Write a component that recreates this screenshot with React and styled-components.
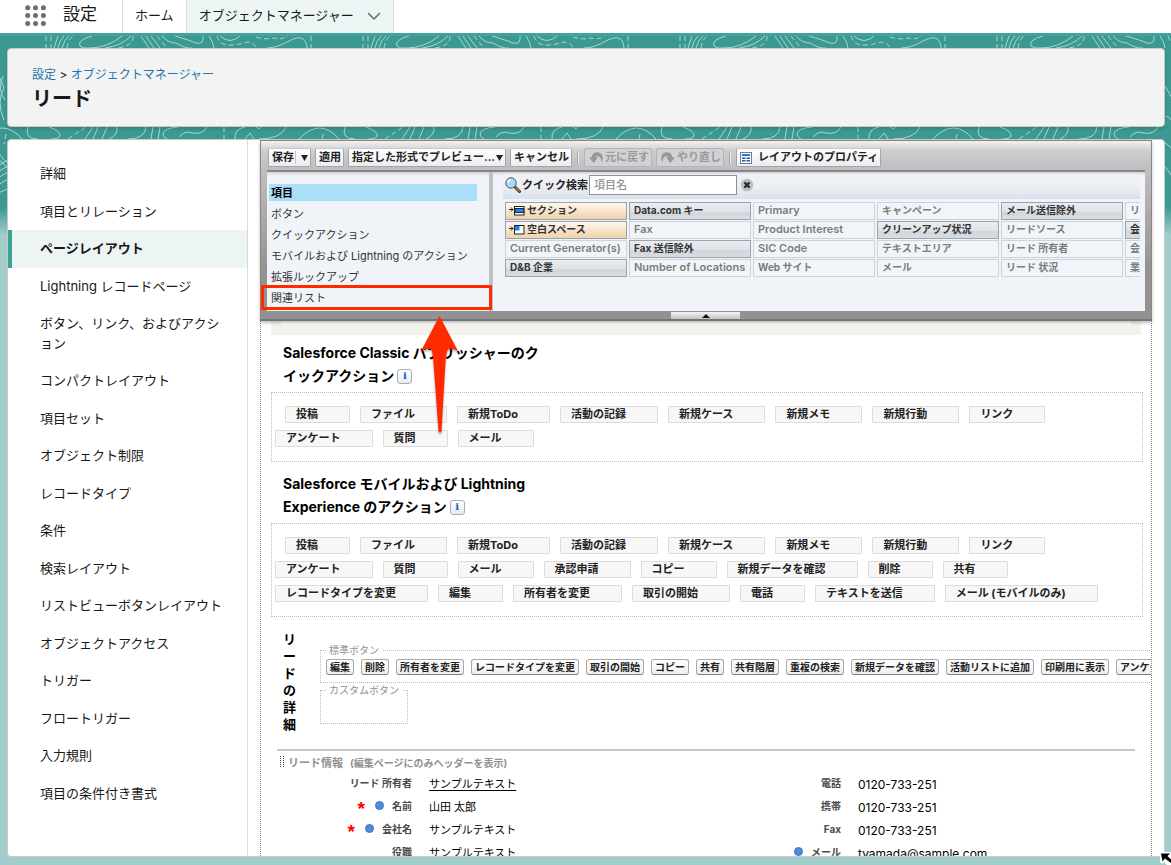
import React from "react";
import styled, { createGlobalStyle, css } from "styled-components";

const GlobalStyle = createGlobalStyle`
  *, *::before, *::after { box-sizing: border-box; }
  body {
    margin: 0;
    font-family: Inter, "Noto Sans CJK JP", sans-serif;
    color: #181818;
    background: #a0cdc9;
  }
  button, input { font-family: inherit; }
  ul, dl, dd, h1, h2, h3, p { margin: 0; padding: 0; }
  ul { list-style: none; }
`;

/* ---------- Page frame ---------- */

const Page = styled.div`
  position: relative;
  display: flex;
  flex-direction: column;
  height: 100vh;
  overflow: hidden;
`;

const GlobalNav = styled.header`
  display: flex;
  align-items: stretch;
  flex: none;
  height: 33px;
  background: #fff;
`;

const LauncherButton = styled.button`
  display: flex;
  align-items: center;
  padding: 0 0 2px 24px;
  border: 0;
  background: none;
`;

const AppName = styled.span`
  padding: 0 25px 0 16px;
  font-size: 17px;
  line-height: 29px;
`;

const NavTab = styled.a`
  display: flex;
  align-items: center;
  gap: 13px;
  padding: 0 12px 5px;
  border-left: 1px solid #dddbda;
  background: ${(p) => (p.$active ? "#ecf5f4" : "#fff")};
  color: #181818;
  font-size: 13px;
  text-decoration: none;
  ${(p) => p.$active && css`border-right: 1px solid #dddbda;`}
  svg { margin-top: 4px; }
`;

const Stage = styled.div`
  position: relative;
  display: flex;
  flex-direction: column;
  flex: 1;
  gap: 12px;
  min-height: 0;
  padding: 15px 6px 8px 7px;
  background: linear-gradient(#43a299 3px, #3b9991 3px, #3b9991 174px, #a0cdc9 202px);
`;

const ContourLayer = styled.svg`
  position: absolute;
  top: 3px;
  left: 0;
  width: 100%;
  height: 180px;
`;

const ObjectHeader = styled.section`
  position: relative;
  flex: none;
  padding: 17px 24px 14px;
  border: 1px solid #c9c9c9;
  border-radius: 4px;
  background: #f3f3f3;
  box-shadow: 0 2px 3px rgba(0, 0, 0, 0.15);
`;

const Breadcrumb = styled.nav`
  font-size: 12px;
  line-height: 17px;
  a { color: #2574a9; text-decoration: none; }
`;

const ObjectTitle = styled.h1`
  padding-top: 4px;
  font-size: 20px;
  line-height: 25px;
`;

const Workspace = styled.div`
  position: relative;
  display: flex;
  flex: 1;
  min-height: 0;
  padding-right: 12px;
  border: 1px solid #c9c9c9;
  border-radius: 4px;
  background: #fff;
  overflow: hidden;
`;

const ResizeCursor = styled.svg`
  position: absolute;
  right: 0;
  bottom: 0;
`;

/* ---------- Sidebar ---------- */

const Sidebar = styled.nav`
  flex: none;
  width: 240px;
  padding-top: 15px;
  border-right: 1px solid #dddbda;
`;

const SideLink = styled.a`
  display: block;
  padding: 9px 24px 9px 28px;
  border-left: 4px solid ${(p) => (p.$active ? "#3ba196" : "transparent")};
  background: ${(p) => (p.$active ? "#ecf5f4" : "transparent")};
  color: #181818;
  font-size: 13px;
  font-weight: ${(p) => (p.$active ? 700 : 400)};
  line-height: 1.5;
  text-decoration: none;
`;

/* ---------- Editor ---------- */

const Editor = styled.main`
  display: flex;
  flex-direction: column;
  flex: 1;
  min-width: 0;
  margin-left: 12px;
`;

const Palette = styled.section`
  position: relative;
  z-index: 1;
  flex: none;
  height: 181px;
  padding: 0 6px;
  border: 1px solid #8f8484;
  border-bottom: 2px solid #757575;
  background: linear-gradient(#f2f2f3, #cdcdcf 10px, #bebfc1 28px, #b5b5b7 50px, #929292 130px);
  box-shadow: 0 2px 3px rgba(0, 0, 0, 0.25);
`;

const Toolbar = styled.div`
  display: flex;
  align-items: center;
  gap: 4px;
  height: 31px;
  padding: 4px 1px 0;
  border-bottom: 2px solid #85868a;
`;

const ToolButton = styled.button`
  display: flex;
  align-items: center;
  gap: ${(p) => p.$gap || 1}px;
  height: 19px;
  padding: 0 2px 0 3px;
  border: 1px solid #a5a5a7;
  border-top-color: #c8c8ca;
  border-radius: 2px;
  background: linear-gradient(#fff, #ececee);
  color: #222;
  font-size: 11px;
  font-weight: 700;
  line-height: 17px;
  white-space: nowrap;
  &:disabled {
    border-color: #b4b4b6;
    background: #d2d2d4;
    color: #9a9a9c;
  }
`;

const SplitArrow = styled.span`
  display: flex;
  align-items: center;
  height: 13px;
  padding-left: 5px;
  border-left: 1px solid #c4c4c4;
`;

const ToolDivider = styled.span`
  width: 2px;
  height: 13px;
  margin: 0 1px;
  background: #ececee;
  border-left: 1px solid #a8a8aa;
`;

const PaletteBody = styled.div`
  display: flex;
  gap: 4px;
  height: 139px;
  background: #bfc3c9;
`;

const CategoryList = styled.ul`
  flex: none;
  width: 222px;
  padding: 12px 12px 0 2px;
  background: linear-gradient(#d4d6d9, #f0f4f8 4px);
`;

const Category = styled.li`
  position: relative;
  height: 17px;
  margin-bottom: 4px;
  background: ${(p) => (p.$active ? "#abdef8" : "transparent")};
  a {
    display: block;
    padding-left: 2px;
    color: ${(p) => (p.$active ? "#000" : "#333")};
    font-size: 11px;
    font-weight: ${(p) => (p.$active ? 700 : 400)};
    line-height: 19px;
    text-decoration: none;
    white-space: nowrap;
  }
`;

const CalloutFrame = styled.span`
  position: absolute;
  top: -4px;
  left: -8px;
  width: 231px;
  height: 25px;
  border: 3px solid #ff2a00;
  border-radius: 1px;
  pointer-events: none;
`;

const CalloutArrow = styled.svg`
  position: absolute;
  top: 27px;
  left: 150px;
  filter: drop-shadow(0 2px 1px rgba(0, 0, 0, 0.3));
  pointer-events: none;
`;

const FieldPanel = styled.div`
  flex: 1;
  min-width: 0;
  padding: 2px 5px 0 10px;
  background: linear-gradient(#d4d6d9, #f0f4f8 4px);
`;

const SearchBar = styled.div`
  display: flex;
  align-items: center;
  gap: 1px;
  height: 25px;
  padding: 0 0 3px 2px;
  background: linear-gradient(#f0f1f5, #edeff3 50%, #d8e2ec);
  label {
    font-size: 11px;
    font-weight: 700;
    line-height: 17px;
    color: #222;
    white-space: nowrap;
  }
`;

const SearchInput = styled.input`
  width: 148px;
  height: 20px;
  padding: 0 4px;
  border: 1px solid #8d8f93;
  background: #fff;
  font-size: 11px;
  &::placeholder { color: #808080; opacity: 1; }
`;

const ClearButton = styled.button`
  display: flex;
  margin-left: 2px;
  padding: 0;
  border: 0;
  background: none;
`;

const FieldGrid = styled.ul`
  display: grid;
  grid-template-rows: repeat(4, 18px);
  grid-auto-flow: column;
  grid-auto-columns: 122px;
  gap: 1px 2px;
  padding: 3px 0 0 2px;
  overflow: hidden;
`;

const fieldTones = {
  tool: css`
    border-color: #98a2ab;
    background: linear-gradient(#fff9f1, #f6e0c4 60%, #efd3ae);
    color: #333;
  `,
  ready: css`
    border-color: #98a5b0;
    background: linear-gradient(#e9edf2, #dfe2e6 55%, #d2d5d9 60%, #d9dce0);
    color: #333;
  `,
  used: css`
    border-color: #ccd4da;
    background: #f1f5f9;
    color: #7c7c7c;
  `,
};

const FieldItem = styled.li`
  display: flex;
  align-items: center;
  gap: 2px;
  padding: 0 0 1px ${(p) => (p.$tone === "tool" ? 2 : 4)}px;
  border: 1px solid;
  font-size: ${(p) => (p.$latin ? 11 : 10)}px;
  font-weight: ${(p) => (p.$latin ? 600 : 700)};
  line-height: 15px;
  white-space: nowrap;
  overflow: hidden;
  ${(p) => fieldTones[p.$tone]}
`;

const CollapseHandle = styled.button`
  position: absolute;
  bottom: 0;
  left: 50%;
  display: flex;
  align-items: center;
  justify-content: center;
  width: 69px;
  height: 7px;
  margin-left: -35px;
  padding: 0;
  border: 0;
  background: linear-gradient(#f4f4f4, #c2c2c2);
`;

/* ---------- Layout canvas ---------- */

const Canvas = styled.div`
  flex: 1;
  min-height: 0;
  padding: 0 8px 0 10px;
  border: 1px dotted #8a8a8a;
  border-width: 0 1px;
  overflow: hidden;
`;

const Strip = styled.div`
  height: 14px;
  margin: 0 2px 6px 0;
  padding: 0 10px;
  background: #f3f3eb;
  &::before {
    content: "";
    display: block;
    height: 4px;
    background: #fff;
  }
`;

const ActionTitle = styled.h2`
  width: 274px;
  margin-bottom: 5px;
  padding-left: 12px;
  color: #000;
  font-size: 14px;
  font-weight: 700;
  line-height: 23px;
`;

const InfoButton = styled.button`
  width: 15px;
  height: 15px;
  margin-left: 3px;
  padding: 0;
  border: 1px solid #a9adb3;
  border-radius: 3px;
  background: linear-gradient(#fff, #e8ebef);
  color: #0a63c9;
  font: 700 10px/12px "DejaVu Serif", serif;
  vertical-align: 2px;
`;

const ActionBox = styled.ul`
  display: flex;
  flex-wrap: wrap;
  gap: 7px 10px;
  margin-bottom: 10px;
  padding: 13px 3px 14px;
  border: 1px dotted #bdbdbd;
`;

const ActionChip = styled.li`
  height: 17px;
  padding: 0 31px 0 10px;
  border: 1px solid #dcdcdc;
  border-radius: 1px;
  background: #f7f7f7;
  color: #222;
  font-size: 11px;
  font-weight: 700;
  line-height: 15px;
  white-space: nowrap;
  &:first-child { margin-left: 10px; }
`;

const DetailHead = styled.section`
  display: flex;
  gap: 24px;
  padding: 4px 0 16px 12px;
`;

const DetailTitle = styled.h2`
  flex: none;
  width: 13px;
  color: #000;
  font-size: 13px;
  line-height: 17px;
  word-break: break-all;
  line-break: anywhere;
`;

const ButtonGroups = styled.div`
  padding-top: 12px;
`;

const ButtonGroup = styled.fieldset`
  display: flex;
  gap: 7px;
  width: max-content;
  min-height: ${(p) => (p.$empty ? 41 : 40)}px;
  margin: 0;
  padding: 2px 5px 7px;
  border: 1px dotted #bdbdbd;
  legend {
    padding: 0 3px;
    color: #8f8f8f;
    font-size: 10px;
    line-height: 14px;
  }
`;

const LayoutButton = styled.button`
  flex: none;
  height: 16px;
  padding: 0 3px;
  border: 1px solid #a9a9a9;
  border-bottom-color: #7f7f7f;
  border-radius: 3px;
  background: linear-gradient(#fff, #efefef);
  color: #222;
  font-size: 10px;
  font-weight: 700;
  line-height: 13px;
`;

const FieldSection = styled.section`
  margin: 0 8px 0 6px;
  border-top: 2px solid #c8c8c8;
`;

const SectionTitle = styled.h3`
  display: flex;
  align-items: center;
  gap: 4px;
  height: 22px;
  padding-left: 3px;
  color: #919191;
  font-size: 11px;
  small { padding-left: 3px; font-size: 10px; }
`;

const FieldColumns = styled.div`
  display: grid;
  grid-template-columns: 1fr 1fr;
`;

const FieldRow = styled.div`
  display: flex;
  gap: 17px;
  line-height: 23px;
  dt {
    display: flex;
    align-items: center;
    justify-content: flex-end;
    gap: 8px;
    flex: none;
    width: 135px;
    height: 21px;
    color: #4a4a4a;
    font-size: 10px;
    font-weight: 700;
  }
  dd {
    color: #000;
    font-size: ${(p) => (p.$latin ? 12 : 11)}px;
    text-decoration: ${(p) => (p.$link ? "underline" : "none")};
    text-underline-offset: 2px;
  }
`;

const RequiredMark = styled.span`
  height: 6px;
  margin-right: 2px;
  color: #f00;
  font-family: "Liberation Sans", sans-serif;
  font-size: 19px;
  line-height: 10px;
`;

const Dot = styled.span`
  width: 9px;
  height: 9px;
  margin-bottom: 3px;
  border: 1px solid #3b73c6;
  border-radius: 50%;
  background: #5089dd;
`;

/* ---------- Icons ---------- */

const WaffleIcon = () => (
  <svg width="23" height="23" viewBox="0 0 23 23" fill="#706e6b" aria-hidden="true">
    {[3.7, 11.5, 19.4].map((y) =>
      [3.7, 11.5, 19.4].map((x) => <circle key={`${x}-${y}`} cx={x} cy={y} r="2.5" />)
    )}
  </svg>
);

const ChevronIcon = () => (
  <svg width="14" height="9" viewBox="0 0 14 9" fill="none" stroke="#706e6b" strokeWidth="1.6" strokeLinecap="round" strokeLinejoin="round" aria-hidden="true">
    <path d="M1.500 1.500 7 7l5.500-5.500" />
  </svg>
);

const CaretDown = () => (
  <svg width="7" height="6" viewBox="0 0 7 6" fill="#222" aria-hidden="true">
    <path d="M0 0h7L3.500 6z" />
  </svg>
);

const UndoIcon = ({ flip }) => (
  <svg width="16" height="13" viewBox="0 0 16 13" fill="#98989a" aria-hidden="true">
    <g transform={flip ? "translate(16 0) scale(-1 1)" : undefined}>
      <path d="M1 6.500h2.500C4 2.500 7 .8 10 1.200c4.500.6 6.500 5.500 3.200 10.300C13.600 7.500 12 5.200 9.600 5.200 8.400 5.200 7.800 5.800 7.600 6.500H10L5.500 12z" />
    </g>
  </svg>
);

const PropertiesIcon = () => (
  <svg width="12" height="12" viewBox="0 0 12 12" aria-hidden="true">
    <rect x=".5" y=".5" width="11" height="11" fill="#fff" stroke="#6f7f92" />
    <path d="M2 2h8v2H2z" fill="#1e78dd" />
    <path d="M2 5.500h3.500V7H2zM6.500 5.500H10V7H6.500zM2 8h3.500v1.500H2zM6.500 8H10v1.500H6.500z" fill="#1e5fae" />
  </svg>
);

const MagnifierIcon = () => (
  <svg width="16" height="16" viewBox="0 0 16 16" aria-hidden="true">
    <path d="m10 10 4.500 4.500" stroke="#3a3128" strokeWidth="3" strokeLinecap="round" />
    <path d="m10.800 10.600 3.500 3.500" stroke="#c89a50" strokeWidth="1.200" strokeLinecap="round" />
    <circle cx="6" cy="6" r="5.200" fill="#a9d8f5" stroke="#4d5d70" />
    <path d="M3 6a3 3 0 0 1 3-3" stroke="#fff" strokeWidth="1.500" fill="none" />
  </svg>
);

const ClearIcon = () => (
  <svg width="14" height="14" viewBox="0 0 14 14" aria-hidden="true">
    <circle cx="7" cy="7" r="6.300" fill="#bcc2c4" />
    <path d="m4.400 4.400 5.200 5.200m0-5.200L4.400 9.600" stroke="#2c2f31" strokeWidth="2.200" />
  </svg>
);

const InsertIcon = ({ blank }) => (
  <svg width="17" height="11" viewBox="0 0 17 11" aria-hidden="true">
    <path d="M1 4.500h4M3 2.500l2 2-2 2" stroke="#222" fill="none" />
    <rect x="6.500" y="1.500" width="9.500" height="8.500" fill="#fff" stroke="#222" />
    {blank ? (
      <path d="M7 2h4.500v4.500H7z" fill="#1589ff" />
    ) : (
      <path d="M7 3.500h9v4H7z" fill="#1589ff" stroke="#222" />
    )}
  </svg>
);

const DragHandle = () => (
  <svg width="4" height="12" viewBox="0 0 4 12" aria-hidden="true">
    <path d="M.5 0v12M3.500 0v12" stroke="#444" strokeDasharray="1 1" />
  </svg>
);

const Contours = () => (
  <ContourLayer aria-hidden="true">
    <defs>
      <pattern id="contours" patternUnits="userSpaceOnUse" width="317" height="200" x="45">
        <g fill="none" stroke="#a9d6d1" strokeWidth="1">
          <path strokeDasharray="5 3" d="M1 0v12M6 0v12M22 12q1-8 6-12M88 0q1 10-16 12M112 0l9 11M172 0q3 10 14 9 7 0 12-2 10-3 13 5M211 1q10 3 18 1 8 2 14-2M266 0v12" />
          <path d="M9 12l4-12M13 12q1-7 6-12M17 12q2-8 7-12M47 0Q32 4 35 10q3 3 10 2Q62 12 77 0M60 12Q76 10 86 0M96 0l8 12M101 0l8 12M106 0l9 12M117 0q6 7 14 7 10 6 16 5M130 0q14 4 21 7 8 2 7-7M164 0q4 5 5 12M175 0q10 9 20 0M222 12q10 0 22-7 17-9 18 7" />
          <path strokeDasharray="5 3" d="M179 91v12M340 103l20-12M23 103l18-12M278 98l-2 10" />
          <path d="M40 103l8-12M48 103l5-12M57 103l5-12M83 103q17 0 18-12M106 103l2-12M113 103l2-12M133 91q-14 1-15 7 1 5 7 6M134 101q6-7 13-4 11 2 15-6M190 103q-1-10 10-12M200 103l5-6 4 6M211 91q4 3 5 0M214 103q22 0 27-12M254 103q21-22 40 0M300 91q-4 12 10 12M4 91q12 4 11 9-1 3-9 3M72 91q1 8-8 12" />
          <path d="M269 12q-3 20 7 40-8 14 0 32M275 40q-6 14 2 24M268 111q9 18 12 14M266 120q14 10 14 14M266 134q7-7 14-10M266 140q7-7 14-10M266 146q7-7 14-10M266 153q7-7 14-10M266 160q7-5 14-7M168 106l10 8M169 50l8 14M170 80q6 2 8 10M168 130q8 8 9 14" />
        </g>
      </pattern>
    </defs>
    <rect width="100%" height="168" fill="url(#contours)" />
  </ContourLayer>
);

/* ---------- Data ---------- */

const sideItems = [
  "詳細", "項目とリレーション", "ページレイアウト", "Lightning レコードページ",
  "ボタン、リンク、およびアクション", "コンパクトレイアウト", "項目セット", "オブジェクト制限",
  "レコードタイプ", "条件", "検索レイアウト", "リストビューボタンレイアウト",
  "オブジェクトアクセス", "トリガー", "フロートリガー", "入力規則", "項目の条件付き書式",
];

const categories = ["項目", "ボタン", "クイックアクション", "モバイルおよび Lightning のアクション", "拡張ルックアップ", "関連リスト"];

const fields = [
  ["セクション", "tool"], ["空白スペース", "tool", true], ["Current Generator(s)", "used"], ["D&B 企業", "ready"],
  ["Data.com キー", "ready"], ["Fax", "used"], ["Fax 送信除外", "ready"], ["Number of Locations", "used"],
  ["Primary", "used"], ["Product Interest", "used"], ["SIC Code", "used"], ["Web サイト", "used"],
  ["キャンペーン", "used"], ["クリーンアップ状況", "ready"], ["テキストエリア", "used"], ["メール", "used"],
  ["メール送信除外", "ready"], ["リードソース", "used"], ["リード 所有者", "used"], ["リード 状況", "used"],
  ["リ", "used"], ["会", "ready"], ["会", "used"], ["業", "used"],
];

const baseActions = [
  "投稿", "ファイル", "新規ToDo", "活動の記録", "新規ケース", "新規メモ", "新規行動", "リンク",
  "アンケート", "質問", "メール",
];

const mobileActions = [
  ...baseActions, "承認申請", "コピー", "新規データを確認", "削除", "共有", "レコードタイプを変更", "編集",
  "所有者を変更", "取引の開始", "電話", "テキストを送信", "メール (モバイルのみ)",
];

const standardButtons = [
  "編集", "削除", "所有者を変更", "レコードタイプを変更", "取引の開始", "コピー", "共有", "共有階層",
  "重複の検索", "新規データを確認", "活動リストに追加", "印刷用に表示", "アンケート",
];

const leftFields = [
  { label: "リード 所有者", value: "サンプルテキスト", link: true },
  { label: "名前", value: "山田 太郎", required: true, dot: true },
  { label: "会社名", value: "サンプルテキスト", required: true, dot: true },
  { label: "役職", value: "サンプルテキスト" },
];

const rightFields = [
  { label: "電話", value: "0120-733-251" },
  { label: "携帯", value: "0120-733-251" },
  { label: "Fax", value: "0120-733-251" },
  { label: "メール", value: "tyamada@sample.com", dot: true },
];

const isLatin = (text) => /^[\x20-\x7e]+$/.test(text);

/* ---------- Composed parts ---------- */

const ActionSection = ({ title, actions }) => (
  <section>
    <ActionTitle>
      {title}
      <InfoButton type="button" aria-label="情報">i</InfoButton>
    </ActionTitle>
    <ActionBox>
      {actions.map((a) => <ActionChip key={a}>{a}</ActionChip>)}
    </ActionBox>
  </section>
);

const FieldList = ({ items }) => (
  <dl>
    {items.map((f) => (
      <FieldRow key={f.label} $link={f.link} $latin={isLatin(f.value)}>
        <dt>
          {f.required && <RequiredMark>*</RequiredMark>}
          {f.dot && <Dot />}
          {f.label}
        </dt>
        <dd>{f.value}</dd>
      </FieldRow>
    ))}
  </dl>
);

export default function App() {
  return (
    <Page>
      <GlobalStyle />
      <GlobalNav>
        <LauncherButton type="button" aria-label="アプリケーションランチャー"><WaffleIcon /></LauncherButton>
        <AppName>設定</AppName>
        <NavTab href="#home">ホーム</NavTab>
        <NavTab href="#objects" $active>オブジェクトマネージャー<ChevronIcon /></NavTab>
      </GlobalNav>

      <Stage>
        <Contours />
        <ObjectHeader>
          <Breadcrumb>
            <a href="#setup">設定</a> &gt; <a href="#objects">オブジェクトマネージャー</a>
          </Breadcrumb>
          <ObjectTitle>リード</ObjectTitle>
        </ObjectHeader>

        <Workspace>
          <Sidebar>
            <ul>
              {sideItems.map((item, i) => (
                <li key={item}><SideLink href={`#s${i}`} $active={i === 2}>{item}</SideLink></li>
              ))}
            </ul>
          </Sidebar>

          <Editor>
            <Palette>
              <Toolbar>
                <ToolButton type="button">保存<SplitArrow><CaretDown /></SplitArrow></ToolButton>
                <ToolButton type="button">適用</ToolButton>
                <ToolButton type="button">指定した形式でプレビュー...<CaretDown /></ToolButton>
                <ToolButton type="button">キャンセル</ToolButton>
                <ToolDivider />
                <ToolButton type="button" disabled><UndoIcon />元に戻す</ToolButton>
                <ToolButton type="button" disabled><UndoIcon flip />やり直し</ToolButton>
                <ToolDivider />
                <ToolButton type="button" $gap={6}><PropertiesIcon />レイアウトのプロパティ</ToolButton>
              </Toolbar>
              <PaletteBody>
                <CategoryList>
                  {categories.map((c, i) => (
                    <Category key={c} $active={i === 0}>
                      <a href={`#c${i}`}>{c}</a>
                      {i === 5 && (
                        <>
                          <CalloutFrame />
                          <CalloutArrow width="42" height="120" viewBox="0 0 42 120" aria-hidden="true">
                            <path d="M20.500 0 39 35q-8-4-10.500-1-1.500 3-2.500 20l-3.500 61q-1.500 3-3 0L15 54q-1-17-2.500-20Q10 31 2 35z" fill="#ff2a00" />
                          </CalloutArrow>
                        </>
                      )}
                    </Category>
                  ))}
                </CategoryList>
                <FieldPanel>
                  <SearchBar>
                    <MagnifierIcon />
                    <label htmlFor="quick-find">クイック検索</label>
                    <SearchInput id="quick-find" type="text" placeholder="項目名" />
                    <ClearButton type="button" aria-label="クリア"><ClearIcon /></ClearButton>
                  </SearchBar>
                  <FieldGrid>
                    {fields.map(([name, tone, blank], i) => (
                      <FieldItem key={i} $tone={tone} $latin={isLatin(name)}>
                        {tone === "tool" && <InsertIcon blank={blank} />}
                        {name}
                      </FieldItem>
                    ))}
                  </FieldGrid>
                </FieldPanel>
              </PaletteBody>
              <CollapseHandle type="button" aria-label="折りたたむ">
                <svg width="8" height="4" viewBox="0 0 8 4" aria-hidden="true"><path d="M4 0l4 4H0z" fill="#111" /></svg>
              </CollapseHandle>
            </Palette>

            <Canvas>
              <Strip />
              <ActionSection title="Salesforce Classic パブリッシャーのクイックアクション" actions={baseActions} />
              <ActionSection title="Salesforce モバイルおよび Lightning Experience のアクション" actions={mobileActions} />
              <DetailHead>
                <DetailTitle>リードの詳細</DetailTitle>
                <ButtonGroups>
                  <ButtonGroup>
                    <legend>標準ボタン</legend>
                    {standardButtons.map((b) => <LayoutButton key={b} type="button">{b}</LayoutButton>)}
                  </ButtonGroup>
                  <ButtonGroup $empty>
                    <legend>カスタムボタン</legend>
                  </ButtonGroup>
                </ButtonGroups>
              </DetailHead>
              <FieldSection>
                <SectionTitle>
                  <DragHandle />リード情報<small>(編集ページにのみヘッダーを表示)</small>
                </SectionTitle>
                <FieldColumns>
                  <FieldList items={leftFields} />
                  <FieldList items={rightFields} />
                </FieldColumns>
              </FieldSection>
            </Canvas>
          </Editor>
        </Workspace>

        <ResizeCursor width="11" height="13" viewBox="0 0 11 13" aria-hidden="true">
          <path d="M0 0h11v13H7l-3-3-2 2-2-2z" fill="#fff" />
          <path d="M1 1.500h9L7.500 4l3.500 3.500V11L5 6.500 2.500 9.500z" fill="#000" />
        </ResizeCursor>
      </Stage>
    </Page>
  );
}
